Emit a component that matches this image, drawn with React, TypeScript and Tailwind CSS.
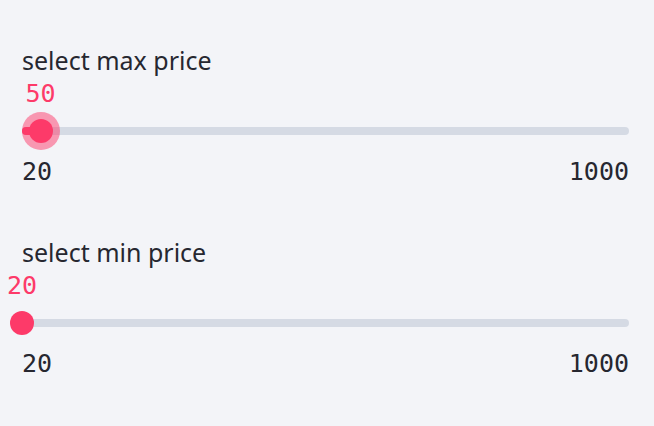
import React from "react";

type SliderProps = {
  label: string;
  value: number;
  min: number;
  max: number;
  focused?: boolean;
};

const PriceSlider: React.FC<SliderProps> = ({ label, value, min, max, focused }) => {
  const pct = ((value - min) / (max - min)) * 100;

  return (
    <div className="flex flex-col">
      <div className="h-7 leading-7 text-[25px] text-[#262730] font-['Noto_Sans',sans-serif]">
        {label}
      </div>

      {/* current value, follows the thumb */}
      <div className="relative h-7 mt-[6px]">
        <span
          className="absolute top-0 -translate-x-1/2 leading-7 text-[25px] text-[#fd3a69] font-['DejaVu_Sans_Mono',monospace]"
          style={{ left: `${pct}%` }}
        >
          {value}
        </span>
      </div>

      {/* track */}
      <div className="relative h-10 mt-[3px] flex items-center">
        <div className="relative w-full h-2 rounded-full bg-[#d5dae4]">
          <div className="absolute left-0 top-0 h-2 rounded-full bg-[#fd3a69]" style={{ width: `${pct}%` }} />
        </div>
        <div
          className="absolute top-1/2 -translate-x-1/2 -translate-y-1/2"
          style={{ left: `${pct}%` }}
        >
          <div
            className={`w-6 h-6 rounded-full bg-[#fd3a69] ${
              focused ? "ring-[7px] ring-[#fd3a69]/50" : ""
            }`}
          />
        </div>
      </div>

      {/* min / max ticks */}
      <div className="h-7 mt-[7px] flex justify-between leading-7 text-[25px] text-[#262730] font-['DejaVu_Sans_Mono',monospace]">
        <span>{min}</span>
        <span>{max}</span>
      </div>
    </div>
  );
};

const App: React.FC = () => {
  return (
    <div className="w-[654px] h-[426px] bg-[#f3f4f8] pl-[22px] pr-[25px] pt-[46px] flex flex-col gap-[52px]">
      <PriceSlider label="select max price" value={50} min={20} max={1000} focused />
      <PriceSlider label="select min price" value={20} min={20} max={1000} />
    </div>
  );
};

export default App;
